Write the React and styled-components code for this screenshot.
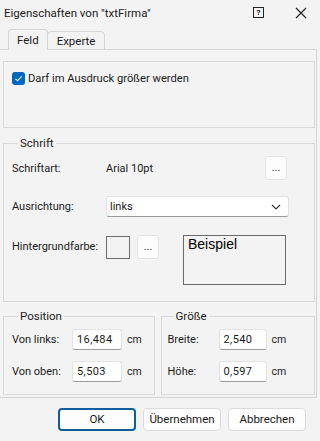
import React from "react";
import styled, { createGlobalStyle } from "styled-components";

const Global = createGlobalStyle`
  body {
    margin: 0;
    background: #f3f3f3;
    font-family: Roboto, "Noto Sans", sans-serif;
    font-size: 11px;
    color: #1b1b1b;
  }
`;

const Dialog = styled.div`
  width: 320px;
  height: 441px;
  display: flex;
  flex-direction: column;
  overflow: hidden;
`;

const TitleBar = styled.div`
  height: 27px;
  display: flex;
  align-items: center;
  padding-left: 4px;
  font-size: 11.5px;
`;

const Title = styled.div`
  flex: 1;
  padding-bottom: 2px;
`;

const HelpBox = styled.div`
  width: 9px;
  height: 9px;
  border: 1px solid #222;
  font-size: 8px;
  font-weight: bold;
  line-height: 9px;
  text-align: center;
  margin-right: 31px;
  margin-bottom: 2px;
`;

const CloseIcon = styled.svg`
  margin-right: 13px;
  margin-bottom: 2px;
`;

const TabStrip = styled.div`
  display: flex;
  align-items: flex-end;
  padding-left: 8px;
  height: 23px;
  margin-bottom: -1px;
  font-size: 11.5px;
`;

const Tab = styled.div`
  height: ${(p) => (p.active ? "19px" : "17px")};
  padding: 0 ${(p) => (p.active ? "8px" : "9px")};
  border: 1px solid #d6d6d6;
  border-bottom: ${(p) => (p.active ? "1px solid #f3f3f3" : "1px solid #d6d6d6")};
  border-radius: 4px 4px 0 0;
  margin-right: ${(p) => (p.active ? "-1px" : "0")};
  display: flex;
  align-items: center;
  background: #f3f3f3;
  position: relative;
  z-index: ${(p) => (p.active ? 2 : 1)};
`;

const Panel = styled.div`
  width: 317px;
  height: 349px;
  box-sizing: border-box;
  border-top: 1px solid #d6d6d6;
  border-right: 1px solid #d6d6d6;
  border-bottom: 1px solid #d6d6d6;
  padding: 11px 1px 0 3px;
  display: flex;
  flex-direction: column;
  position: relative;
  z-index: 1;
`;

const Group = styled.fieldset`
  margin: 0;
  min-width: 0;
  border: 1px solid #dadada;
  padding: ${(p) => p.pad || "0"};
  width: ${(p) => p.w || "auto"};
  height: ${(p) => p.h || "auto"};
  margin-top: ${(p) => p.mt || "0"};
  box-sizing: border-box;
`;

const Legend = styled.legend`
  padding: 0 2px;
  margin-left: 6px;
  line-height: 16px;
  font-size: 11.5px;
`;

const CheckRow = styled.label`
  display: flex;
  align-items: center;
  gap: 3px;
  font-size: 11.2px;
`;

const CheckBox = styled.span`
  width: 13px;
  height: 13px;
  border-radius: 3px;
  background: #0067c0;
  display: flex;
  align-items: center;
  justify-content: center;
`;

const FormRow = styled.div`
  display: flex;
  align-items: ${(p) => (p.top ? "flex-start" : "center")};
  height: ${(p) => p.h};
  margin-top: ${(p) => p.mt || "0"};
`;

const Label = styled.div`
  width: ${(p) => p.w};
  flex-shrink: 0;
  margin-top: ${(p) => p.mt || "0"};
`;

const Value = styled.div`
  width: 159px;
`;

const SmallButton = styled.div`
  width: 20px;
  height: 20px;
  border: 1px solid #e2e2e2;
  border-radius: 3px;
  background: #fdfdfd;
  display: flex;
  align-items: center;
  justify-content: center;
  font-size: 11px;
  color: #333;
  padding-bottom: 2px;
  box-sizing: content-box;
  margin-left: ${(p) => p.ml || "0"};
`;

const Select = styled.div`
  width: 183px;
  height: 21px;
  border: 1px solid #e2e2e2;
  border-bottom-color: #9a9a9a;
  border-radius: 3px;
  background: #fff;
  display: flex;
  align-items: center;
  justify-content: space-between;
  padding: 0 7px 0 3px;
  box-sizing: border-box;
`;

const Swatch = styled.div`
  width: 22px;
  height: 21px;
  border: 1px solid #6e6e6e;
  background: #f3f3f3;
  margin-top: 1px;
`;

const Sample = styled.div`
  width: 103px;
  height: 50px;
  border: 1px solid #6a6a6a;
  margin-left: 24px;
  font-family: "Liberation Sans", Arial, sans-serif;
  font-size: 14px;
  color: #000;
  padding-left: 4px;
  line-height: 16px;
  box-sizing: border-box;
`;

const BottomGroups = styled.div`
  display: flex;
  gap: 6px;
  margin-top: 6px;
`;

const Input = styled.div`
  width: ${(p) => p.w};
  height: 21px;
  border: 1px solid #e2e2e2;
  border-bottom-color: #9a9a9a;
  border-radius: 3px;
  background: #fff;
  display: flex;
  align-items: center;
  padding-left: 4px;
  box-sizing: border-box;
  letter-spacing: 0.4px;
`;

const Unit = styled.div`
  margin-left: 5px;
  font-size: 10.5px;
`;

const Spacer = styled.div`
  height: 11px;
`;

const ButtonBar = styled.div`
  display: flex;
  justify-content: flex-end;
  gap: 7px;
  padding: 10px 14px 0 0;
  font-size: 11.5px;
`;

const Button = styled.div`
  width: 78px;
  height: 23px;
  box-sizing: border-box;
  border: ${(p) => (p.primary ? "2px solid #0f5e9c" : "1px solid #dcdcdc")};
  border-radius: 4px;
  background: #fdfdfd;
  display: flex;
  align-items: center;
  justify-content: center;
  padding-bottom: 1px;
`;

const ValueRow = ({ label, value, lw, iw }) => (
  <FormRow h="21px">
    <Label w={lw}>{label}</Label>
    <Input w={iw}>{value}</Input>
    <Unit>cm</Unit>
  </FormRow>
);

export default function App() {
  return (
    <>
      <Global />
      <Dialog>
        <TitleBar>
          <Title>Eigenschaften von "txtFirma"</Title>
          <HelpBox>?</HelpBox>
          <CloseIcon width="12" height="12" viewBox="0 0 12 12">
            <path d="M1 1 L11 11 M11 1 L1 11" stroke="#222" strokeWidth="1.1" fill="none" />
          </CloseIcon>
        </TitleBar>
        <TabStrip>
          <Tab active>Feld</Tab>
          <Tab>Experte</Tab>
        </TabStrip>
        <Panel>
          <Group h="67px" pad="10px 8px">
            <CheckRow>
              <CheckBox>
                <svg width="9" height="9" viewBox="0 0 9 9">
                  <path d="M1.5 4.8 L3.6 6.8 L7.6 2.4" stroke="#fff" strokeWidth="1.1" fill="none" />
                </svg>
              </CheckBox>
              Darf im Ausdruck größer werden
            </CheckRow>
          </Group>

          <Group pad="6px 8px 16px 8px" mt="7px">
            <Legend>Schrift</Legend>
            <FormRow h="22px">
              <Label w="94px">Schriftart:</Label>
              <Value>Arial 10pt</Value>
              <SmallButton>...</SmallButton>
            </FormRow>
            <FormRow h="21px" mt="17px">
              <Label w="94px">Ausrichtung:</Label>
              <Select>
                links
                <svg width="10" height="6" viewBox="0 0 10 6">
                  <path d="M1 1 L5 5 L9 1" stroke="#333" strokeWidth="1.1" fill="none" />
                </svg>
              </Select>
            </FormRow>
            <FormRow h="50px" mt="18px" top>
              <Label w="94px" mt="5px">Hintergrundfarbe:</Label>
              <Swatch />
              <SmallButton ml="7px">...</SmallButton>
              <Sample>Beispiel</Sample>
            </FormRow>
          </Group>

          <BottomGroups>
            <Group w="152px" h="87px" pad="5px 8px 0 8px">
              <Legend>Position</Legend>
              <ValueRow label="Von links:" value="16,484" lw="60px" iw="50px" />
              <Spacer />
              <ValueRow label="Von oben:" value="5,503" lw="60px" iw="50px" />
            </Group>
            <Group w="155px" h="87px" pad="5px 6px 0 6px">
              <Legend>Größe</Legend>
              <ValueRow label="Breite:" value="2,540" lw="51px" iw="48px" />
              <Spacer />
              <ValueRow label="Höhe:" value="0,597" lw="51px" iw="48px" />
            </Group>
          </BottomGroups>
        </Panel>
        <ButtonBar>
          <Button primary>OK</Button>
          <Button>Übernehmen</Button>
          <Button>Abbrechen</Button>
        </ButtonBar>
      </Dialog>
    </>
  );
}
